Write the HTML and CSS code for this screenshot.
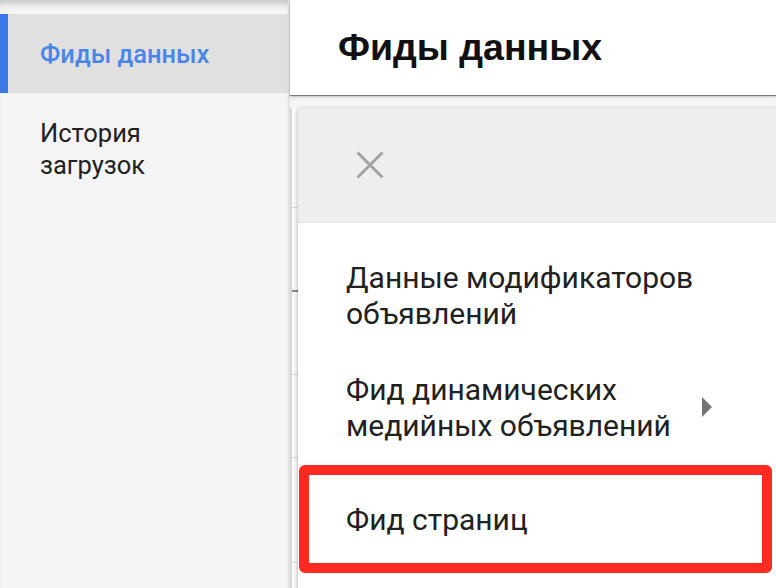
FILE: index.html
```html
<!DOCTYPE html>
<html lang="ru">
<head>
<meta charset="utf-8">
<link rel="stylesheet" href="styles.css">
</head>
<body>
<div class="app">
  <aside class="sidebar">
    <a class="nav-item active">Фиды данных</a>
    <a class="nav-item">История загрузок</a>
  </aside>
  <main class="main">
    <header class="page-header">
      <h1 class="page-title">Фиды данных</h1>
    </header>
    <div class="content">
      <div class="table">
        <div class="row r1"></div>
        <div class="row r2"></div>
        <div class="row r3"></div>
        <div class="row r4"></div>
        <div class="row r5"></div>
      </div>
    </div>
    <div class="menu">
      <div class="menu-head">
        <svg class="close" width="28" height="28" viewBox="0 0 28 28"><path d="M1.5 1.5 L26.5 26.5 M26.5 1.5 L1.5 26.5" stroke="#a3a3a3" stroke-width="3" fill="none"/></svg>
      </div>
      <ul class="menu-list">
        <li class="menu-item">Данные модификаторов<br>объявлений</li>
        <li class="menu-item has-sub"><span>Фид динамических<br>медийных объявлений</span><span class="arrow"></span></li>
        <li class="menu-item highlighted">Фид страниц<span class="annotation"></span></li>
      </ul>
    </div>
  </main>
</div>
</body>
</html>
```

FILE: styles.css
```css
* { box-sizing: border-box; }
html, body { margin: 0; padding: 0; }
body {
  width: 776px;
  height: 588px;
  overflow: hidden;
  font-family: Roboto, "Noto Sans", sans-serif;
  background: #f5f5f5;
}
.app {
  display: flex;
  height: 588px;
}
.sidebar {
  width: 290px;
  flex: none;
  background: #f4f4f4;
  border-right: 2px solid #e2e2e2;
  padding-top: 14px;
  display: flex;
  flex-direction: column;
  box-shadow: inset 0 8px 6px -4px rgba(0,0,0,0.18);
}
.nav-item {
  display: block;
  padding: 0 100px 0 40px;
  font-size: 25.5px;
  line-height: 32px;
  color: #212121;
}
.nav-item.active {
  height: 79px;
  display: flex;
  align-items: center;
  white-space: nowrap;
  background: #e0e0e0;
  color: #4a86e8;
  font-weight: 500;
  border-left: 8px solid #3b78e7;
  padding: 0 16px 0 32px;
  margin-bottom: 24px;
}
.main {
  flex: 1;
  position: relative;
  min-width: 0;
}
.page-header {
  height: 95px;
  background: #fff;
  box-shadow: 0 1px 1px rgba(0,0,0,0.45), 0 2px 4px rgba(0,0,0,0.15);
  position: relative;
  z-index: 1;
  display: flex;
  align-items: center;
  padding-left: 48px;
}
.page-title {
  margin: 0;
  font-family: "Liberation Sans", Arial, sans-serif;
  font-weight: bold;
  font-size: 37.5px;
  color: #111;
}
.content {
  padding-top: 13px;
}
.table {
  border-left: 2px solid #d6d6d6;
  background: #fafafa;
  height: 480px;
}
.row { border-bottom: 1px solid #d8d8d8; }
.r1 { height: 100px; }
.r2 { height: 84px; border-bottom: 2px solid #8a8a8a; }
.r3 { height: 83px; }
.r4 { height: 83px; }
.r5 { height: 105px; }
.menu {
  position: absolute;
  top: 108px;
  left: 8px;
  width: 500px;
  bottom: -20px;
  background: #fff;
  border-radius: 3px;
  box-shadow: -1px 1px 4px rgba(0,0,0,0.2), 0 0 2px rgba(0,0,0,0.1);
  z-index: 2;
}
.menu-head {
  height: 115px;
  background: #eeeeee;
  border-bottom: 1px solid #e4e4e4;
  display: flex;
  align-items: center;
  padding-left: 58px;
  border-radius: 3px 3px 0 0;
}
.close { display: block; }
.menu-list {
  list-style: none;
  margin: 0;
  padding: 17px 0 0;
}
.menu-item {
  position: relative;
  height: 112px;
  padding: 0 0 0 48px;
  display: flex;
  align-items: center;
  font-size: 30px;
  line-height: 36px;
  color: #212121;
}
.menu-item.has-sub {
  padding-right: 86px;
}
.arrow {
  margin-left: auto;
  width: 0;
  height: 0;
  border-top: 10px solid transparent;
  border-bottom: 10px solid transparent;
  border-left: 10px solid #757575;
  margin-top: -3px;
}
.annotation {
  position: absolute;
  left: 1px;
  top: 1px;
  width: 473px;
  height: 108px;
  border: 10px solid #fe2a20;
  border-radius: 6px;
}
```
